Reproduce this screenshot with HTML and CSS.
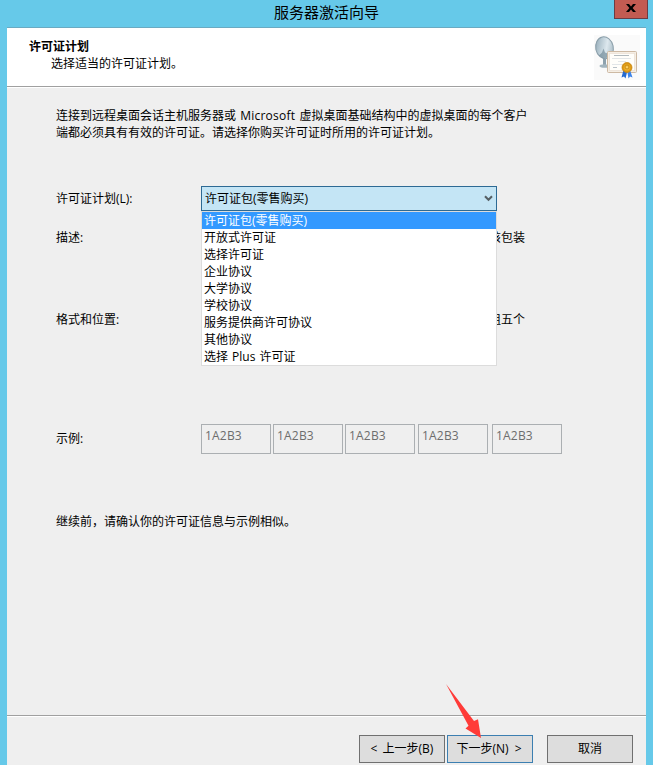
FILE: index.html
```
<!DOCTYPE html>
<html lang="zh-CN">
<head>
    <meta charset="UTF-8">
    <meta name="viewport" content="width=device-width, initial-scale=1.0">
    <title>服务器激活向导</title>
    <link rel="stylesheet" href="styles.css">
</head>
<body>
    <div class="window">
        <div class="titlebar">
            <span class="title">服务器激活向导</span>
            <button class="close" aria-label="关闭">
                <svg width="10" height="8" viewBox="0 0 10 8"><path d="M0 0h3l2 2.4L7 0h3L6.6 4 10 8H7L5 5.6 3 8H0l3.4-4z" fill="#000"/></svg>
            </button>
        </div>
        <div class="header">
            <div class="header-text">
                <h1>许可证计划</h1>
                <p>选择适当的许可证计划。</p>
            </div>
            <svg class="header-icon" width="46" height="45" viewBox="0 0 46 45">
                <defs>
                    <linearGradient id="dish" x1="0" y1="0" x2="1" y2="0.5">
                        <stop offset="0" stop-color="#7d929f"/>
                        <stop offset="0.25" stop-color="#a9bdc8"/>
                        <stop offset="0.7" stop-color="#dde8ee"/>
                        <stop offset="1" stop-color="#b4c5ce"/>
                    </linearGradient>
                    <radialGradient id="seal">
                        <stop offset="0" stop-color="#ffd873"/>
                        <stop offset="0.6" stop-color="#eba81c"/>
                        <stop offset="1" stop-color="#c98508"/>
                    </radialGradient>
                </defs>
                <rect width="46" height="45" fill="#fafafa"/>
                <path d="M9 22h3v8H9z" fill="#8ea2ae"/>
                <ellipse cx="10.5" cy="31" rx="5" ry="1.8" fill="#a3b5bf"/>
                <ellipse cx="10.5" cy="12.8" rx="8.8" ry="11" transform="rotate(-12 10.5 12.8)" fill="url(#dish)" stroke="#8b9faa"/>
                <path d="M5 20.5l3-3 1.5-4 1.5 4 4 1.5-1 3.5-5 1z" fill="#647f8e" opacity="0.6"/>
                <rect x="13.5" y="16.5" width="29" height="21" rx="1" fill="#f5eee4" stroke="#cdb9a3"/>
                <rect x="15.5" y="18.5" width="25" height="17" fill="#fffefa" stroke="#e2d5c6" stroke-dasharray="1 1"/>
                <path d="M20 20.5h15" stroke="#b2babd"/>
                <path d="M18 23.5h19M24 26.5h8M18 29.5h12" stroke="#e2e6e8"/>
                <path d="M19 32.5h4" stroke="#b9c2c8"/>
                <path d="M29.5 35l-2 7.5 2.5-1 1.5 2 2-8z" fill="#2369cf"/>
                <path d="M33 35l1.5 8.5 1.5-2 2.5 1-2.5-7.5z" fill="#3b82e8"/>
                <circle cx="33" cy="32.5" r="5" fill="url(#seal)" stroke="#cf8c14" stroke-width="0.8"/>
                <circle cx="33" cy="32" r="2" fill="none" stroke="#bd810e" stroke-width="0.8"/>
            </svg>
        </div>

        <div class="content">
            <p class="intro">连接到远程桌面会话主机服务器或 <span class="latin">Microsoft</span> 虚拟桌面基础结构中的虚拟桌面的每个客户<br>端都必须具有有效的许可证。请选择你购买许可证时所用的许可证计划。</p>
            <div class="row row-plan">
                <label>许可证计划(L):</label>
                <div class="combo">
                    <div class="combo-box">
                        <span>许可证包(零售购买)</span>
                        <svg width="9" height="7" viewBox="0 0 9 7"><path d="M1 1.2l3.5 3.6L8 1.2" fill="none" stroke="#555f64" stroke-width="2"/></svg>
                    </div>
                    <ul class="combo-list">
                        <li class="selected">许可证包(零售购买)</li>
                        <li>开放式许可证</li>
                        <li>选择许可证</li>
                        <li>企业协议</li>
                        <li>大学协议</li>
                        <li>学校协议</li>
                        <li>服务提供商许可协议</li>
                        <li>其他协议</li>
                        <li>选择 Plus 许可证</li>
                    </ul>
                </div>
            </div>
            <div class="row row-desc">
                <label>描述:</label>
                <span class="value">该包装</span>
            </div>
            <div class="row row-format">
                <label>格式和位置:</label>
                <span class="value">组五个</span>
            </div>
            <div class="row row-sample">
                <label>示例:</label>
                <div class="codes">
                    <span>1A2B3</span>
                    <span>1A2B3</span>
                    <span>1A2B3</span>
                    <span>1A2B3</span>
                    <span>1A2B3</span>
                </div>
            </div>
            <p class="confirm">继续前，请确认你的许可证信息与示例相似。</p>
        </div>

        <div class="footer">
            <button>&lt; 上一步(B)</button>
            <button class="next">下一步(N) &gt;</button>
            <button class="cancel">取消</button>
            <svg class="arrow" width="36" height="55" viewBox="0 0 36 55"><path d="M0 0L28 37 32 35.3 35 54 19.5 44.5 22.5 41.8Z" fill="#ff3b38"/></svg>
        </div>
    </div>
</body>
</html>
```
FILE: styles.css
```
* {
    box-sizing: border-box;
}

body {
    margin: 0;
    background: #66c9e9;
    font: 12px/17px "Open Sans", "Noto Sans CJK SC", sans-serif;
    color: #000;
    overflow: hidden;
}

h1, p, ul {
    margin: 0;
    padding: 0;
}

.window {
    display: flex;
    flex-direction: column;
    height: 765px;
    padding: 0 7px;
}

.titlebar {
    position: relative;
    height: 28px;
    border-bottom: 1px solid #6aaac2;
    text-align: center;
}

.title {
    font-size: 15px;
    line-height: 25px;
}

.close {
    position: absolute;
    top: -1px;
    right: -2px;
    display: flex;
    align-items: center;
    justify-content: center;
    width: 34px;
    height: 20px;
    padding: 0 0 2px;
    background: #c35b52;
    border: 1px solid #6b3d45;
}

.header {
    display: flex;
    justify-content: space-between;
    height: 59px;
    padding: 7px 6px 0 22px;
    background: #fff;
    border-bottom: 1px solid #a0a0a0;
}

.header-text {
    padding-top: 3px;
}

.header h1 {
    font-size: 12px;
    line-height: 17px;
    font-weight: bold;
}

.header p {
    padding-left: 22px;
}

.content {
    flex: 1;
    padding: 19px 49px 0;
    background: #efefef;
    border-top: 1px solid #fff;
}

.intro {
    white-space: nowrap;
    word-spacing: 1px;
}

.latin {
    letter-spacing: 0.25px;
}

.row {
    display: flex;
}

.row label {
    width: 145px;
}

.row-plan {
    height: 25px;
    margin-top: 45px;
    line-height: 25px;
}

.combo {
    position: relative;
    width: 296px;
}

.combo-box {
    display: flex;
    align-items: center;
    justify-content: space-between;
    height: 25px;
    padding: 0 3px;
    background: #c4e5f5;
    border: 1px solid #2d6a94;
}

.combo-list {
    position: absolute;
    top: 25px;
    left: 0;
    width: 296px;
    height: 155px;
    background: #fff;
    border: 1px solid #dcdcdc;
    list-style: none;
    line-height: 17px;
    word-spacing: 1px;
}

.combo-list li {
    height: 17px;
    padding-left: 2px;
}

.combo-list .selected {
    background: #3399ff;
    color: #fff;
}

.row-desc {
    margin-top: 18px;
}

.row-format {
    margin-top: 65px;
}

.value {
    width: 324px;
    text-align: right;
}

.row-sample {
    margin-top: 96px;
}

.row-sample label {
    padding-top: 6px;
}

.codes {
    display: flex;
    gap: 2px;
}

.codes span {
    width: 70px;
    height: 30px;
    padding: 2px 3px;
    border: 1px solid #abafb2;
    color: #6d6d6d;
    letter-spacing: 0.2px;
}

.codes span:nth-child(4) {
    margin-left: 1px;
}

.codes span:nth-child(5) {
    margin-left: 2px;
}

.confirm {
    margin-top: 59px;
}

.footer {
    position: relative;
    display: flex;
    justify-content: flex-end;
    gap: 2px;
    height: 50px;
    padding: 18px 13px 0 0;
    background: #efefef;
    border-top: 1px solid #a0a0a0;
    box-shadow: inset 0 1px #fff;
}

.footer button {
    width: 86px;
    height: 28px;
    padding: 0 0 1px;
    background: #dddddd;
    border: 1px solid #707070;
    font: inherit;
    color: #000;
    margin-top: 1px;
    word-spacing: 2px;
}

.footer .next {
    padding-right: 2px;
    border-color: #3c7fb1;
    word-spacing: 3px;
}

.footer .cancel {
    margin-left: 12px;
}

.arrow {
    position: absolute;
    top: -32px;
    left: 439px;
}
```
